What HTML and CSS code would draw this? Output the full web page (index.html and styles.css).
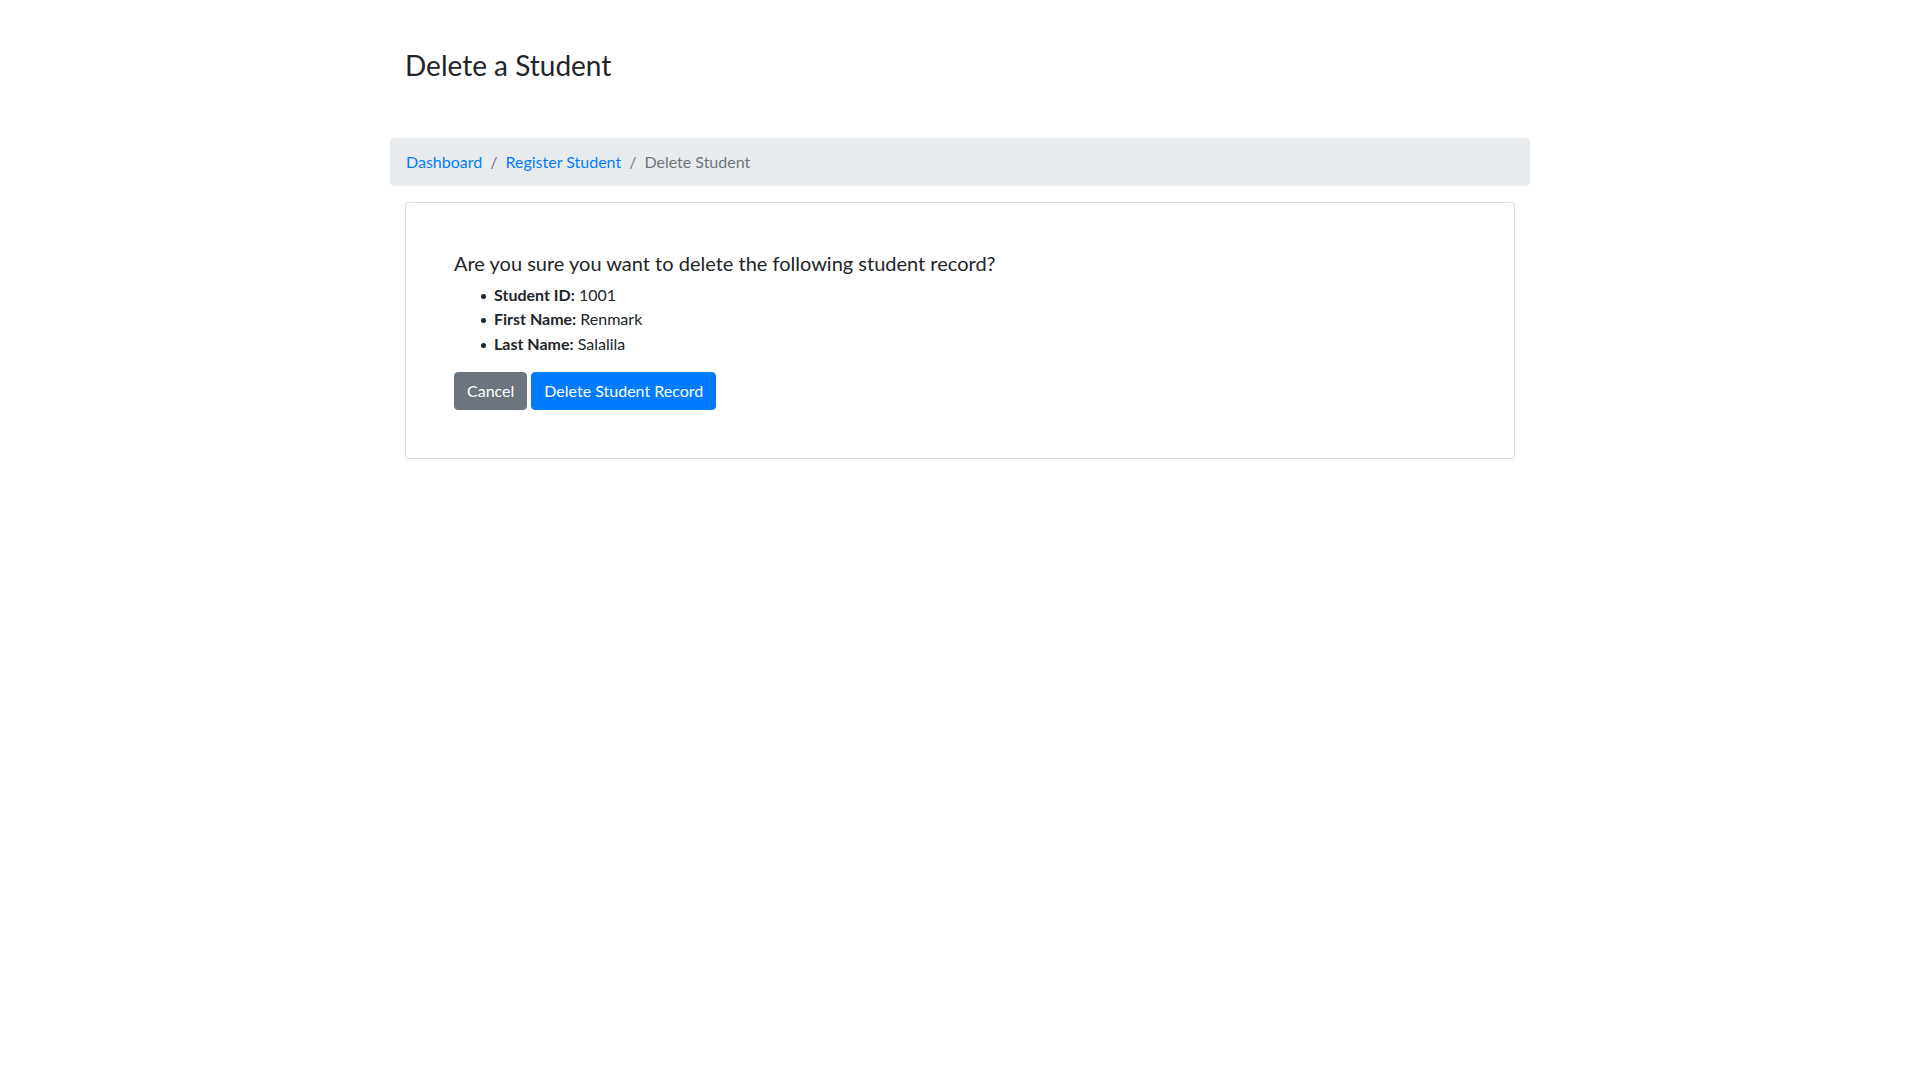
FILE: index.html
```html
<!DOCTYPE html>
<html lang="en">
<head>
<meta charset="utf-8">
<title>Delete a Student</title>
<link rel="stylesheet" href="styles.css">
</head>
<body>
<div class="container">
  <header class="page-header">
    <h3 class="page-title">Delete a Student</h3>
  </header>
  <nav class="breadcrumb">
    <a class="crumb-link" href="#">Dashboard</a>
    <span class="crumb-sep">/</span>
    <a class="crumb-link" href="#">Register Student</a>
    <span class="crumb-sep">/</span>
    <span class="crumb-active">Delete Student</span>
  </nav>
  <div class="card">
    <div class="card-body">
      <h5 class="question">Are you sure you want to delete the following student record?</h5>
      <ul class="details">
        <li><strong>Student ID:</strong> 1001</li>
        <li><strong>First Name:</strong> Renmark</li>
        <li><strong>Last Name:</strong> Salalila</li>
      </ul>
      <div class="actions">
        <a class="btn btn-secondary" href="#">Cancel</a>
        <button class="btn btn-primary" type="button">Delete Student Record</button>
      </div>
    </div>
  </div>
</div>
</body>
</html>
```
FILE: styles.css
```css
* { box-sizing: border-box; }

html, body {
  margin: 0;
  padding: 0;
  background: #fff;
}

body {
  font-family: "Lato", "Liberation Sans", sans-serif;
  font-size: 16px;
  line-height: 1.5;
  color: #212529;
}

.container {
  width: 1140px;
  margin: 0 auto;
}

.page-header {
  padding: 49px 15px 0;
}

.page-title {
  margin: 0 0 55.4px;
  font-size: 28px;
  font-weight: 400;
  line-height: 1.2;
}

.breadcrumb {
  display: flex;
  align-items: center;
  height: 48px;
  padding: 12px 16px;
  margin-bottom: 16px;
  background: #e9ecef;
  border-radius: 4px;
}

.crumb-link {
  color: #007bff;
  text-decoration: none;
}

.crumb-sep {
  color: #6c757d;
  padding: 0 8px;
}

.crumb-active {
  color: #6c757d;
}

.card {
  margin: 0 15px;
  border: 1px solid rgba(0, 0, 0, 0.125);
  border-radius: 4px;
  background: #fff;
}

.card-body {
  padding: 48px;
}

.question {
  margin: 0 0 8px;
  font-size: 20px;
  font-weight: 400;
  line-height: 1.2;
}

.details {
  margin: 0 0 16px;
  padding-left: 40px;
  list-style: none;
}

.details li {
  position: relative;
  line-height: 24.5px;
}

.details li::before {
  content: "";
  position: absolute;
  left: -13px;
  top: 11px;
  width: 5px;
  height: 5px;
  border-radius: 50%;
  background: #212529;
}

.details strong {
  font-weight: 700;
}

.actions {
  display: flex;
  gap: 4px;
}

.btn {
  display: inline-block;
  height: 38px;
  padding: 6px 12px;
  font-family: inherit;
  font-size: 16px;
  line-height: 24px;
  border: 1px solid transparent;
  border-radius: 4px;
  color: #fff;
  text-decoration: none;
  cursor: pointer;
}

.btn-secondary {
  background: #6c757d;
  border-color: #6c757d;
}

.btn-primary {
  background: #007bff;
  border-color: #007bff;
}
```
